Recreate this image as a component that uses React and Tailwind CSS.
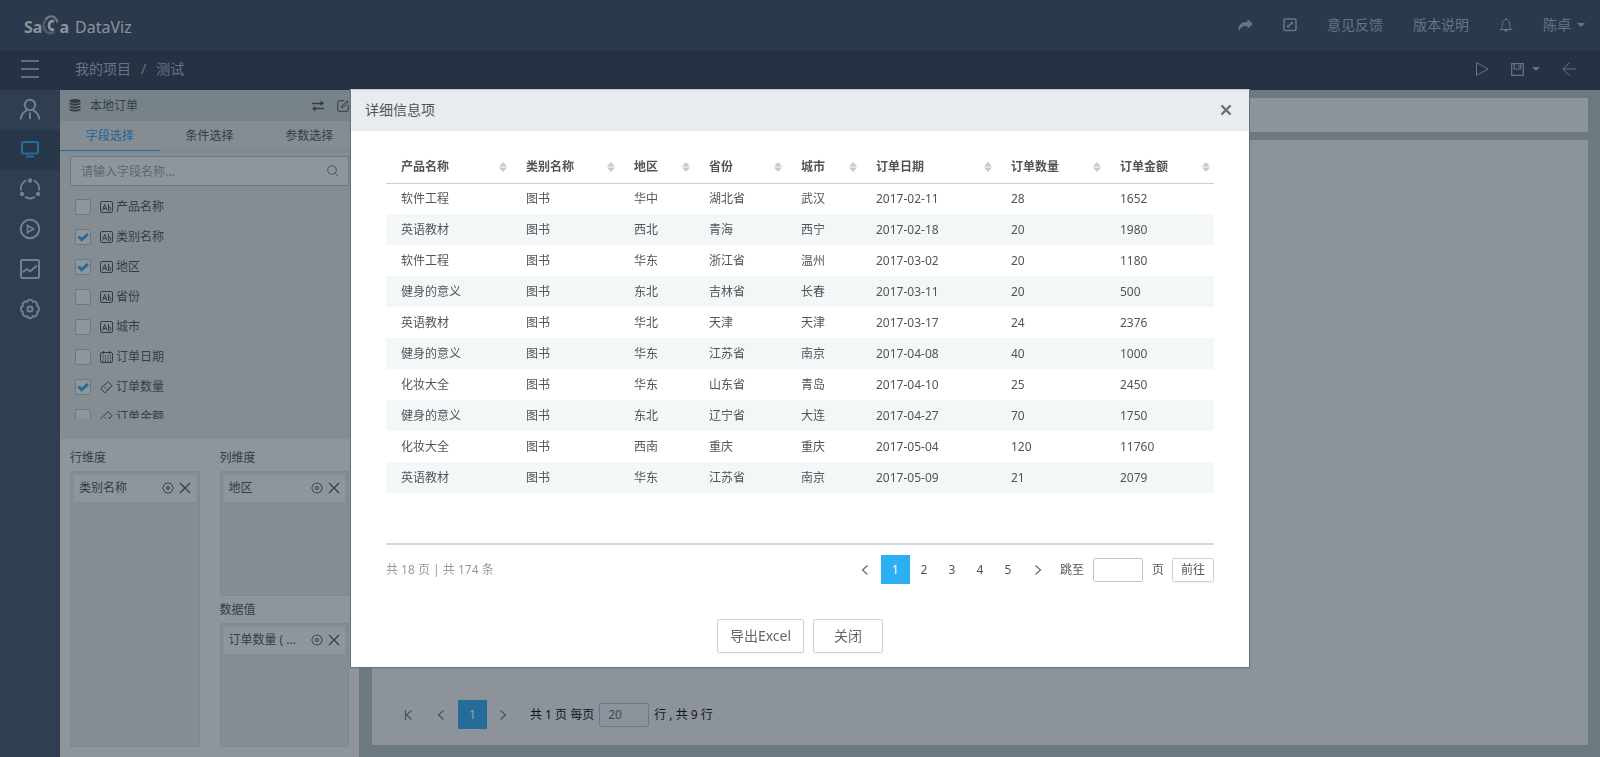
import { clsx } from 'clsx'

const menu = [
    { name: '用户', icon: UserIcon },
    { name: '展示', icon: MonitorIcon, active: true },
    { name: '共享', icon: CircleIcon },
    { name: '播放', icon: PlayCircleIcon },
    { name: '图表', icon: ChartIcon },
    { name: '设置', icon: GearIcon },
]

const fields = [
    { name: '产品名称', icon: TextTypeIcon },
    { name: '类别名称', icon: TextTypeIcon, checked: true },
    { name: '地区', icon: TextTypeIcon, checked: true },
    { name: '省份', icon: TextTypeIcon },
    { name: '城市', icon: TextTypeIcon },
    { name: '订单日期', icon: DateTypeIcon },
    { name: '订单数量', icon: RulerIcon, checked: true },
    { name: '订单金额', icon: RulerIcon },
]

const columns = [
    { name: '产品名称', width: 'w-[125px]' },
    { name: '类别名称', width: 'w-[108px]' },
    { name: '地区', width: 'w-[75px]' },
    { name: '省份', width: 'w-[92px]' },
    { name: '城市', width: 'w-[75px]' },
    { name: '订单日期', width: 'w-[135px]' },
    { name: '订单数量', width: 'w-[109px]' },
    { name: '订单金额', width: 'w-[109px]' },
]

const rows = [
    ['软件工程', '图书', '华中', '湖北省', '武汉', '2017-02-11', '28', '1652'],
    ['英语教材', '图书', '西北', '青海', '西宁', '2017-02-18', '20', '1980'],
    ['软件工程', '图书', '华东', '浙江省', '温州', '2017-03-02', '20', '1180'],
    ['健身的意义', '图书', '东北', '吉林省', '长春', '2017-03-11', '20', '500'],
    ['英语教材', '图书', '华北', '天津', '天津', '2017-03-17', '24', '2376'],
    ['健身的意义', '图书', '华东', '江苏省', '南京', '2017-04-08', '40', '1000'],
    ['化妆大全', '图书', '华东', '山东省', '青岛', '2017-04-10', '25', '2450'],
    ['健身的意义', '图书', '东北', '辽宁省', '大连', '2017-04-27', '70', '1750'],
    ['化妆大全', '图书', '西南', '重庆', '重庆', '2017-05-04', '120', '11760'],
    ['英语教材', '图书', '华东', '江苏省', '南京', '2017-05-09', '21', '2079'],
]

function Svg({ size = 20, width = 1, className, children }) {
    return (
        <svg
            width={size}
            height={size}
            viewBox={`0 0 ${size} ${size}`}
            fill="none"
            stroke="currentColor"
            strokeWidth={width}
            className={clsx('shrink-0', className)}
            aria-hidden="true"
        >
            {children}
        </svg>
    )
}

function UserIcon() {
    return (
        <Svg size={22} width={2}>
            <circle cx="11" cy="7" r="5.2" />
            <path d="M1.600 21.500c.5-4.500 3-7.800 6.400-9.200M20.400 21.500c-.5-4.500-3-7.800-6.400-9.200M11 14.500v6.500" />
        </Svg>
    )
}

function MonitorIcon() {
    return (
        <Svg size={20} width={2}>
            <rect x="2" y="3" width="16" height="11.500" rx="1.500" />
            <path d="M6 17.500h8" />
        </Svg>
    )
}

function CircleIcon() {
    return (
        <Svg size={22} width={2}>
            <path d="M7 2.400A9.300 9.300 0 0 0 2 12.500M15 2.400a9.300 9.300 0 0 1 5 10.100M6 18.900a9.500 9.500 0 0 0 10 0" />
            <g fill="currentColor" stroke="none">
                <circle cx="11" cy="2.500" r="2.200" />
                <circle cx="3" cy="16" r="2.200" />
                <circle cx="19" cy="16" r="2.200" />
            </g>
        </Svg>
    )
}

function PlayCircleIcon() {
    return (
        <Svg size={22} width={2}>
            <circle cx="11" cy="11" r="9.300" />
            <path d="M8.500 7.500v7l6-3.500z" strokeWidth="1.600" />
        </Svg>
    )
}

function ChartIcon() {
    return (
        <Svg size={22} width={2}>
            <rect x="2" y="2" width="18" height="18" rx="1.500" />
            <path d="M4 14l4-3 3 2.500 7-6" />
        </Svg>
    )
}

function GearIcon() {
    return (
        <Svg size={22} width={2}>
            <path d="M18.200 8A3.300 3.300 0 0 1 18.200 14A3.300 3.300 0 0 1 14 18.200A3.300 3.300 0 0 1 8 18.200A3.300 3.300 0 0 1 3.800 14A3.300 3.300 0 0 1 3.800 8A3.300 3.300 0 0 1 8 3.800A3.300 3.300 0 0 1 14 3.800A3.300 3.300 0 0 1 18.200 8z" />
            <circle cx="11" cy="11" r="2.600" />
        </Svg>
    )
}

function SmallGearIcon() {
    return (
        <Svg size={12}>
            <path d="M10.200 4.300A2 2 0 0 1 10.200 7.700A2 2 0 0 1 7.700 10.200A2 2 0 0 1 4.300 10.200A2 2 0 0 1 1.800 7.700A2 2 0 0 1 1.800 4.300A2 2 0 0 1 4.300 1.800A2 2 0 0 1 7.700 1.800A2 2 0 0 1 10.200 4.300z" />
            <circle cx="6" cy="6" r="1.500" />
        </Svg>
    )
}

function TextTypeIcon() {
    return (
        <Svg size={13}>
            <rect x=".5" y=".5" width="12" height="11" rx="1.500" />
            <path d="M2.500 9.500L4.700 3.500 6.900 9.500M3.300 7.500h2.800M8.500 3v6.500M8.500 6.500c.6-.6 2.300-.6 2.300 1.300s-1.700 2-2.300 1.300" />
        </Svg>
    )
}

function DateTypeIcon() {
    return (
        <Svg size={13}>
            <rect x=".5" y="1.500" width="12" height="10" rx="1.500" />
            <path d="M3.500 0v3M9.500 0v3" />
            <path strokeDasharray="1 1.500" strokeWidth="1.500" d="M2.500 5h8.500M2.500 7.500h8.500M2.500 10h8.500" />
        </Svg>
    )
}

function RulerIcon() {
    return (
        <Svg size={13}>
            <path strokeLinejoin="round" d="M8 .7l4.200 4.200L5 11.800.7 7.600zM4.500 6l1.500 1.500M6.500 9l1-1M8.500 7l1-1" />
        </Svg>
    )
}

function XIcon({ bold }) {
    return (
        <Svg size={12} width={bold ? 2.400 : 1.200}>
            <path d={bold ? 'M1.500 1.500l9 9M10.500 1.500l-9 9' : 'M1 1l10 10M11 1L1 11'} />
        </Svg>
    )
}

function Chevron({ left, first }) {
    return (
        <Svg size={10} width={1.200}>
            {left ? <path d="M7.500.5L2.500 5l5 4.500" /> : <path d="M2.500.5l5 4.500-5 4.500" />}
            {first && <path d="M1.500 0v10" />}
        </Svg>
    )
}

function Caret() {
    return (
        <svg width="8" height="4" viewBox="0 0 8 4" fill="currentColor" aria-hidden="true">
            <path d="M0 0h8L4 4z" />
        </svg>
    )
}

function Logo() {
    return (
        <a href="#" className="flex items-baseline pt-1 text-base leading-6 text-[#8c949c]" aria-label="SaCa DataViz">
            <span className="font-bold">Sa</span>
            <svg width="17" height="20" viewBox="0 0 17 20" fill="none" stroke="currentColor" className="-mt-1 self-center" aria-hidden="true">
                <path d="M4 4c1.500-2 4-3 7-2.500 2.500 1.500 4 3.500 4.500 6" strokeWidth="2.200" opacity=".7" />
                <path d="M5 3.500C1.500 6 .8 11 2.500 14.500s6.500 5 10 2.500" strokeWidth="2.600" opacity=".4" />
                <path d="M12 6.500C9 5.500 7 7 7 10.500s2.500 5 5 3.800" strokeWidth="2.800" />
            </svg>
            <span className="font-bold">a</span>
            <span className="ml-[6px]">DataViz</span>
        </a>
    )
}

function TopBar() {
    return (
        <header className="flex h-[50px] items-center justify-between bg-[#2b394c] pl-6 pr-[15px] text-sm text-[#667486]">
            <Logo />
            <nav className="flex items-center gap-[30px]">
                <button aria-label="分享">
                    <svg width="15" height="13" viewBox="0 0 15 13" fill="currentColor" aria-hidden="true">
                        <path d="M9.500 0L15 5 9.500 9.700V7C5 6.700 2.300 8 1 12.500-.8 7 2.500 2.800 9.500 2.800z" />
                    </svg>
                </button>
                <button aria-label="全屏">
                    <Svg size={14} width={1.600}>
                        <rect x="1" y="1" width="12" height="11.500" rx="1" />
                        <path d="M4.500 9L9.500 4.500" />
                        <path d="M7 4h3v3zM4 6.500v3h3z" fill="currentColor" stroke="none" />
                    </Svg>
                </button>
                <a href="#">意见反馈</a>
                <a href="#">版本说明</a>
                <button aria-label="通知">
                    <Svg size={14}>
                        <path d="M.5 11.500h13M2 11.500c1-1 1.200-2.500 1.200-4.500C3.200 3.500 5 1.500 7 1.500S10.800 3.500 10.800 7c0 2 .2 3.500 1.200 4.500M7 0v1.500" />
                        <path d="M5 12h4c-.3 2.200-3.700 2.200-4 0z" fill="currentColor" stroke="none" />
                    </Svg>
                </button>
                <button className="flex items-center gap-[6px]">
                    陈卓
                    <Caret />
                </button>
            </nav>
        </header>
    )
}

function BreadcrumbBar() {
    return (
        <div className="flex h-10 items-center border-t border-[#28354a] bg-[#263143] pb-[3px] text-sm text-[#667486]">
            <button className="flex w-[60px] justify-center text-[#728092]" aria-label="菜单">
                <Svg size={18} width={1.600}>
                    <path d="M0 1h18M0 9h18M0 17h18" />
                </Svg>
            </button>
            <div className="flex flex-1 gap-[10px] pl-[15px]">
                <a href="#">我的项目</a>
                <span>/</span>
                <span>测试</span>
            </div>
            <div className="flex items-center gap-[22px] pr-6">
                <button aria-label="运行">
                    <Svg size={14}>
                        <path strokeLinejoin="round" d="M1.500.5v13L13 7z" />
                    </Svg>
                </button>
                <button className="flex items-center gap-2" aria-label="保存">
                    <Svg size={13} width={1.200}>
                        <path d="M.7.700h11.600v11.600H.700zM3.200.700v5.300h6.600V.700M7.800 2v2.500" />
                    </Svg>
                    <Caret />
                </button>
                <button aria-label="返回">
                    <Svg size={14}>
                        <path d="M7.500.5L1 7l6.500 6.500M1 7h13" />
                    </Svg>
                </button>
            </div>
        </div>
    )
}

function Sidebar() {
    return (
        <nav className="w-[60px] shrink-0 bg-[#303e51] text-[#728092]">
            {menu.map(({ name, icon: Icon, active }) => (
                <a
                    key={name}
                    href="#"
                    aria-label={name}
                    className={clsx('flex h-10 items-center justify-center pb-[2px]', active && 'bg-[#28364a] text-[#246d9b]')}
                >
                    <Icon />
                </a>
            ))}
        </nav>
    )
}

function Field({ name, icon: Icon, checked }) {
    return (
        <label className="flex h-[30px] items-center">
            <span className="grid">
                <input
                    type="checkbox"
                    defaultChecked={checked}
                    className="peer col-start-1 row-start-1 size-4 appearance-none rounded-[2px] border border-[#6c7887] bg-[#8e969c]"
                />
                <svg
                    width="16"
                    height="16"
                    viewBox="0 0 16 16"
                    fill="none"
                    stroke="#246d9b"
                    strokeWidth="3"
                    className="invisible col-start-1 row-start-1 peer-checked:visible"
                    aria-hidden="true"
                >
                    <path d="M3.500 7.500l3.200 3.200 6.300-5.700" />
                </svg>
            </span>
            <span className="ml-[9px] mr-[3px]">
                <Icon />
            </span>
            {name}
        </label>
    )
}

function Chip({ name }) {
    return (
        <div className="flex h-[27px] items-center gap-[5px] bg-[#8e969c] px-[5px] pb-px">
            <span className="min-w-0 flex-1 whitespace-nowrap">{name}</span>
            <button aria-label="设置">
                <SmallGearIcon />
            </button>
            <button aria-label="删除">
                <XIcon />
            </button>
        </div>
    )
}

function DropZone({ title, item }) {
    return (
        <section className="flex min-h-0 flex-1 flex-col">
            <h3 className="h-[27px] pt-[6px] leading-4">{title}</h3>
            <div className="flex-1 rounded-[2px] border border-[#7f888e] bg-[#858c92] p-[3px]">
                <Chip name={item} />
            </div>
        </section>
    )
}

function FieldPanel() {
    return (
        <aside className="flex w-[299px] shrink-0 flex-col bg-[#8e969c] text-xs text-[#343d45]">
            <div className="flex h-[31px] items-center bg-[#788389] pl-[9px] pr-[10px]">
                <svg width="12" height="13" viewBox="0 0 12 13" fill="currentColor" aria-hidden="true">
                    <ellipse cx="6" cy="2" rx="5.500" ry="1.900" />
                    <path d="M.5 3.500c2 1.500 9 1.500 11 0v1.800c-2 1.800-9 1.800-11 0zM.5 6.500c2 1.500 9 1.500 11 0v1.800c-2 1.800-9 1.800-11 0zM.5 9.500c2 1.500 9 1.500 11 0v1.600c-2 2-9 2-11 0z" />
                </svg>
                <h2 className="ml-[9px] flex-1">本地订单</h2>
                <button className="mr-[13px]" aria-label="切换">
                    <Svg size={12} width={1.500}>
                        <path d="M0 3.500h10M2 8.500h10" />
                        <path d="M8.500.500L12 3.500 8.500 6zM3.500 6L0 8.500l3.500 3z" fill="currentColor" stroke="none" />
                    </Svg>
                </button>
                <button aria-label="编辑">
                    <Svg size={12}>
                        <path d="M7 .8H2A1.300 1.300 0 0 0 .7 2v8A1.300 1.300 0 0 0 2 11.300h8a1.300 1.300 0 0 0 1.300-1.300V5M4.500 8l.5-2L10 1l1.300 1.200-5 5z" />
                    </Svg>
                </button>
            </div>
            <div className="flex h-[318px] flex-col overflow-hidden bg-[#858d93]">
                <div className="flex h-[30px] shrink-0 border-b border-[#7b848b]">
                    <button className="h-[30px] flex-1 border-b border-[#246d9b] text-[#1e659a]">字段选择</button>
                    <button className="flex-1">条件选择</button>
                    <button className="flex-1">参数选择</button>
                </div>
                <label className="mx-[10px] mt-[5px] flex h-[30px] shrink-0 items-center rounded-[2px] border border-[#6c7887] bg-[#8e969c] pl-[10px] pr-[9px]">
                    <input
                        className="min-w-0 flex-1 pt-[2px] outline-none placeholder:text-[#5c6670]"
                        placeholder="请输入字段名称..."
                        aria-label="字段名称"
                    />
                    <Svg size={12} className="text-[#4a545d]">
                        <circle cx="5" cy="5" r="4.300" />
                        <path d="M8.300 8.300L11.500 11.500" />
                    </Svg>
                </label>
                <div className="mt-[6px] h-[227px] shrink-0 overflow-y-auto pl-[15px] [scrollbar-width:none]">
                    {fields.map((field) => (
                        <Field key={field.name} {...field} />
                    ))}
                </div>
            </div>
            <div className="flex min-h-0 flex-1 gap-5 px-[10px] pb-[10px] pt-[5px]">
                <DropZone title="行维度" item="类别名称" />
                <div className="flex min-w-0 flex-1 flex-col">
                    <DropZone title="列维度" item="地区" />
                    <DropZone title="数据值" item="订单数量 ( ..." />
                </div>
            </div>
        </aside>
    )
}

function Canvas() {
    return (
        <main className="flex min-w-0 flex-1 flex-col gap-2 bg-[#6d7981] pb-3 pl-[13px] pr-3 pt-2 text-xs">
            <div className="h-[34px] bg-[#8d959b]" />
            <div className="flex flex-1 items-end bg-[#8c939a] pb-4 pl-8">
                <div className="flex h-[29px] items-center text-[#12171c]">
                    <button className="text-[#49525b]" aria-label="首页">
                        <Chevron left first />
                    </button>
                    <button className="ml-[22px] text-[#49525b]" aria-label="上一页">
                        <Chevron left />
                    </button>
                    <button className="ml-3 size-[29px] bg-[#246d9b] text-[#9aa5ad]">1</button>
                    <button className="ml-[11px] text-[#49525b]" aria-label="下一页">
                        <Chevron />
                    </button>
                    <label className="ml-[22px] flex items-center gap-[5px]">
                        共 1 页 每页
                        <input defaultValue="20" className="h-6 w-[50px] rounded-[2px] border border-[#6c7887] pl-2 text-[#3f4850] outline-none" />
                        行 , 共 9 行
                    </label>
                </div>
            </div>
        </main>
    )
}

function SortIcon() {
    return (
        <svg width="8" height="10" viewBox="0 0 8 10" fill="#c5c8cc" aria-hidden="true">
            <path d="M4 0l4 4.500H0zM0 5.500h8L4 10z" />
        </svg>
    )
}

function DetailTable() {
    return (
        <table className="w-full table-fixed text-left">
            <thead>
                <tr className="h-[34px] border-b border-[#c9cfd6]">
                    {columns.map(({ name, width }) => (
                        <th key={name} className={clsx('pl-[15px] pr-1 pt-[2px]', width)}>
                            <button className="flex w-full items-center justify-between font-bold">
                                {name}
                                <SortIcon />
                            </button>
                        </th>
                    ))}
                </tr>
            </thead>
            <tbody>
                {rows.map((row) => (
                    <tr key={row[5]} className="h-[31px] even:bg-[#f4f7f7]">
                        {row.map((cell, i) => (
                            <td key={i} className="pl-[15px]">
                                {cell}
                            </td>
                        ))}
                    </tr>
                ))}
            </tbody>
        </table>
    )
}

function Pagination() {
    return (
        <div className="flex items-center">
            <span className="flex-1 text-[#999]">共 18 页 | 共 174 条</span>
            <button className="mr-[11px] text-[#666]" aria-label="上一页">
                <Chevron left />
            </button>
            <button className="size-[29px] bg-[#2eaef3] text-white">1</button>
            {[2, 3, 4, 5].map((page) => (
                <button key={page} className="h-[29px] w-7">
                    {page}
                </button>
            ))}
            <button className="ml-[11px] text-[#666]" aria-label="下一页">
                <Chevron />
            </button>
            <label className="ml-[17px] flex items-center gap-[9px]">
                跳至
                <input className="h-6 w-[50px] rounded-[2px] border border-[#bcc5d3] px-2 outline-none" />
                页
            </label>
            <button className="ml-2 h-6 w-[42px] rounded-[2px] border border-[#cbd3dc] shadow-xs">前往</button>
        </div>
    )
}

function DetailDialog() {
    return (
        <div className="fixed inset-0 flex items-start justify-center pt-[89px]">
            <div
                role="dialog"
                aria-label="详细信息项"
                className="w-[900px] max-w-full border border-[#6b737b] border-t-[#c3c8ce] bg-white text-xs text-[#515558] shadow-xs"
            >
                <div className="flex h-[41px] items-center justify-between bg-[#e8ebf0] pb-px pl-[14px] pr-[17px]">
                    <h2 className="text-sm">详细信息项</h2>
                    <button className="text-[#6b6e72]" aria-label="关闭">
                        <XIcon bold />
                    </button>
                </div>
                <div className="px-[35px] pt-[18px]">
                    <div className="border-b-2 border-[#d3d8de] pb-[50px]">
                        <DetailTable />
                    </div>
                    <div className="pt-[10px]">
                        <Pagination />
                    </div>
                </div>
                <div className="flex justify-center gap-[9px] pb-[14px] pt-[35px] text-sm text-[#666]">
                    <button className="h-[34px] w-[87px] rounded-[2px] border border-[#cbd3dc] shadow-xs">导出Excel</button>
                    <button className="h-[34px] w-[70px] rounded-[2px] border border-[#cbd3dc] shadow-xs">关闭</button>
                </div>
            </div>
        </div>
    )
}

export default function App() {
    return (
        <div className="flex min-h-screen flex-col font-['Noto_Sans','Noto_Sans_CJK_SC',sans-serif]">
            <TopBar />
            <BreadcrumbBar />
            <div className="flex flex-1">
                <Sidebar />
                <FieldPanel />
                <Canvas />
            </div>
            <DetailDialog />
        </div>
    )
}
